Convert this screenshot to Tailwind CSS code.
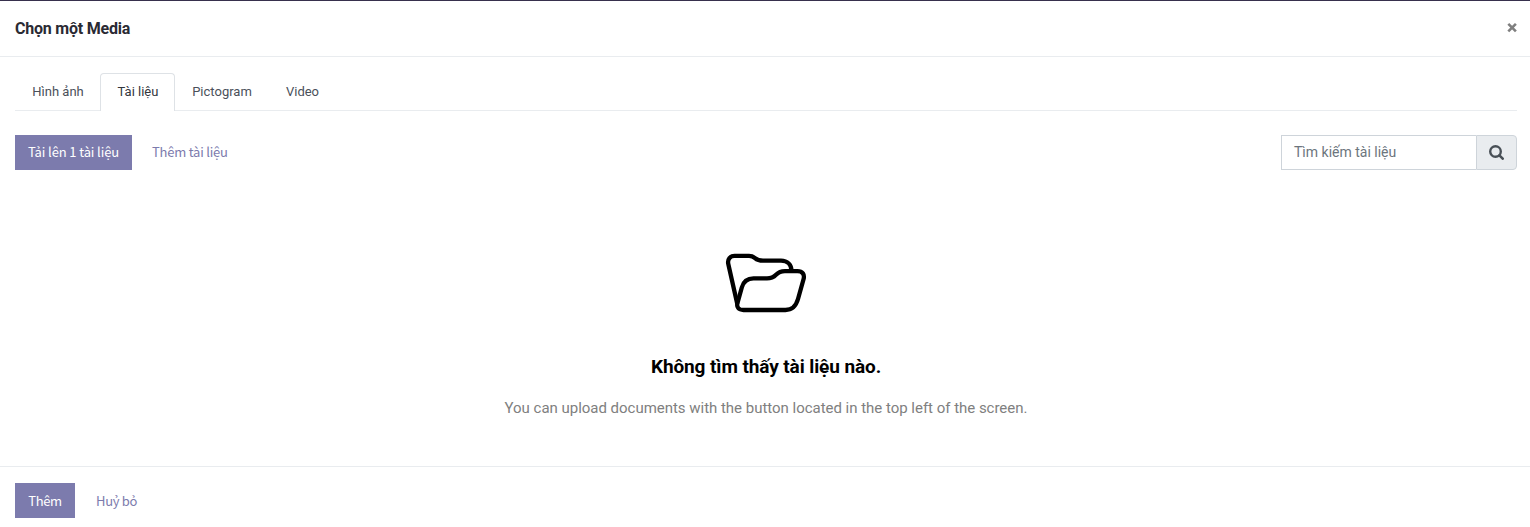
<!DOCTYPE html>
<html lang="vi">
<head>
<meta charset="utf-8">
<title>Chọn một Media</title>
<script src="https://cdn.jsdelivr.net/npm/@tailwindcss/browser@4"></script>
</head>
<body class="flex h-[527px] flex-col overflow-hidden border-t border-[#37304d] bg-white font-['Roboto',sans-serif] text-[#4a505a]">
  <header class="flex h-14 shrink-0 items-center justify-between border-b border-[#e9ecef] pr-[13px] pl-[15px]">
    <h1 class="text-base font-bold tracking-[-0.22px] text-[#2a2a33]">Chọn một Media</h1>
    <button aria-label="Đóng" class="-mt-[3px]">
      <svg class="block size-[10px] overflow-visible" viewBox="0 0 10 10" fill="none" stroke="#7f7f7f" stroke-width="2.6"><path d="M1.300 1.800l7.600 7.600M8.900 1.800L1.300 9.400"/></svg>
    </button>
  </header>
  <main class="flex min-h-0 flex-1 flex-col pr-[13px] pl-[15px] pt-4">
    <nav class="flex h-[38px] shrink-0 border-b border-[#e9ecef] text-[13px]">
      <a class="flex h-[38px] w-[85px] items-center justify-center pl-px">Hình ảnh</a>
      <a class="flex h-[38px] w-[75px] items-center justify-center rounded-t border border-b-0 border-[#dee2e6] bg-white pb-0.5 pl-px text-[#33363d]">Tài liệu</a>
      <a class="flex h-[38px] w-[94px] items-center justify-center">Pictogram</a>
      <a class="flex h-[38px] w-[67px] items-center justify-center">Video</a>
    </nav>
    <div class="mt-6 flex h-[35px] shrink-0 justify-between">
      <div class="flex font-['Noto_Sans_CJK_SC',sans-serif] text-[13px]">
        <button class="w-[117px] bg-[#7c7bad] pb-0.5 tracking-[-0.12px] whitespace-nowrap text-white">Tải lên 1 tài liệu</button>
        <button class="ml-5 pb-0.5 tracking-[-0.22px] whitespace-nowrap text-[#7c7bad]">Thêm tài liệu</button>
      </div>
      <div class="flex text-sm">
        <div class="flex w-[195px] items-center border border-r-0 border-[#ced4da] pb-0.5 pl-3 text-[#6c757d]">Tìm kiếm tài liệu</div>
        <button aria-label="Tìm" class="flex w-[41px] items-center justify-center rounded-r border border-[#ced4da] bg-[#e9ecef]">
          <svg class="size-[15px]" viewBox="0 0 15 15" fill="none" stroke="#495057"><circle cx="6.5" cy="6.5" r="5.3" stroke-width="2.4"/><path d="M10.400 10.400l3.300 3.300" stroke-width="2.600" stroke-linecap="round"/></svg>
        </button>
      </div>
    </div>
    <section class="flex flex-1 flex-col items-center pt-[83px]">
      <svg class="h-[60px] w-[82px] shrink-0" viewBox="0 0 82 60" fill="none" stroke="#000" stroke-width="4.300" stroke-linejoin="round"><path d="M12.300 51L3.400 11.500C2 6 5.500 2.900 9.500 2.900H24C31.500 2.900 28.500 7.700 38 7.700H56C62.500 7.700 66.500 12 66.500 18"/><path d="M12.500 50L16.800 34.500C18.500 28.500 22 25.400 28.500 25.400H42C53 25.400 49 18.100 60 18.100H72.500C77.500 18.100 79.800 21.500 78.600 26L73 46C71 53 66.500 57 60.500 57H18.500C13.500 57 11.300 54 12.500 50Z"/></svg>
      <h2 class="mt-[41px] text-[19px] leading-[26px] font-bold tracking-[-0.1px] text-black">Không tìm thấy tài liệu nào.</h2>
      <p class="mt-[17px] text-[15px] leading-[22px] tracking-[-0.02px] text-[#808080]">You can upload documents with the button located in the top left of the screen.</p>
    </section>
  </main>
  <footer class="flex h-[61px] shrink-0 border-t border-[#e9ecef] pt-4 pl-[15px] font-['Noto_Sans_CJK_SC',sans-serif] text-[13px]">
    <button class="h-[35px] w-[60px] bg-[#7c7bad] tracking-[-0.3px] text-white">Thêm</button>
    <button class="ml-[21px] h-[35px] tracking-[-0.3px] text-[#7c7bad]">Huỷ bỏ</button>
  </footer>
</body>
</html>
